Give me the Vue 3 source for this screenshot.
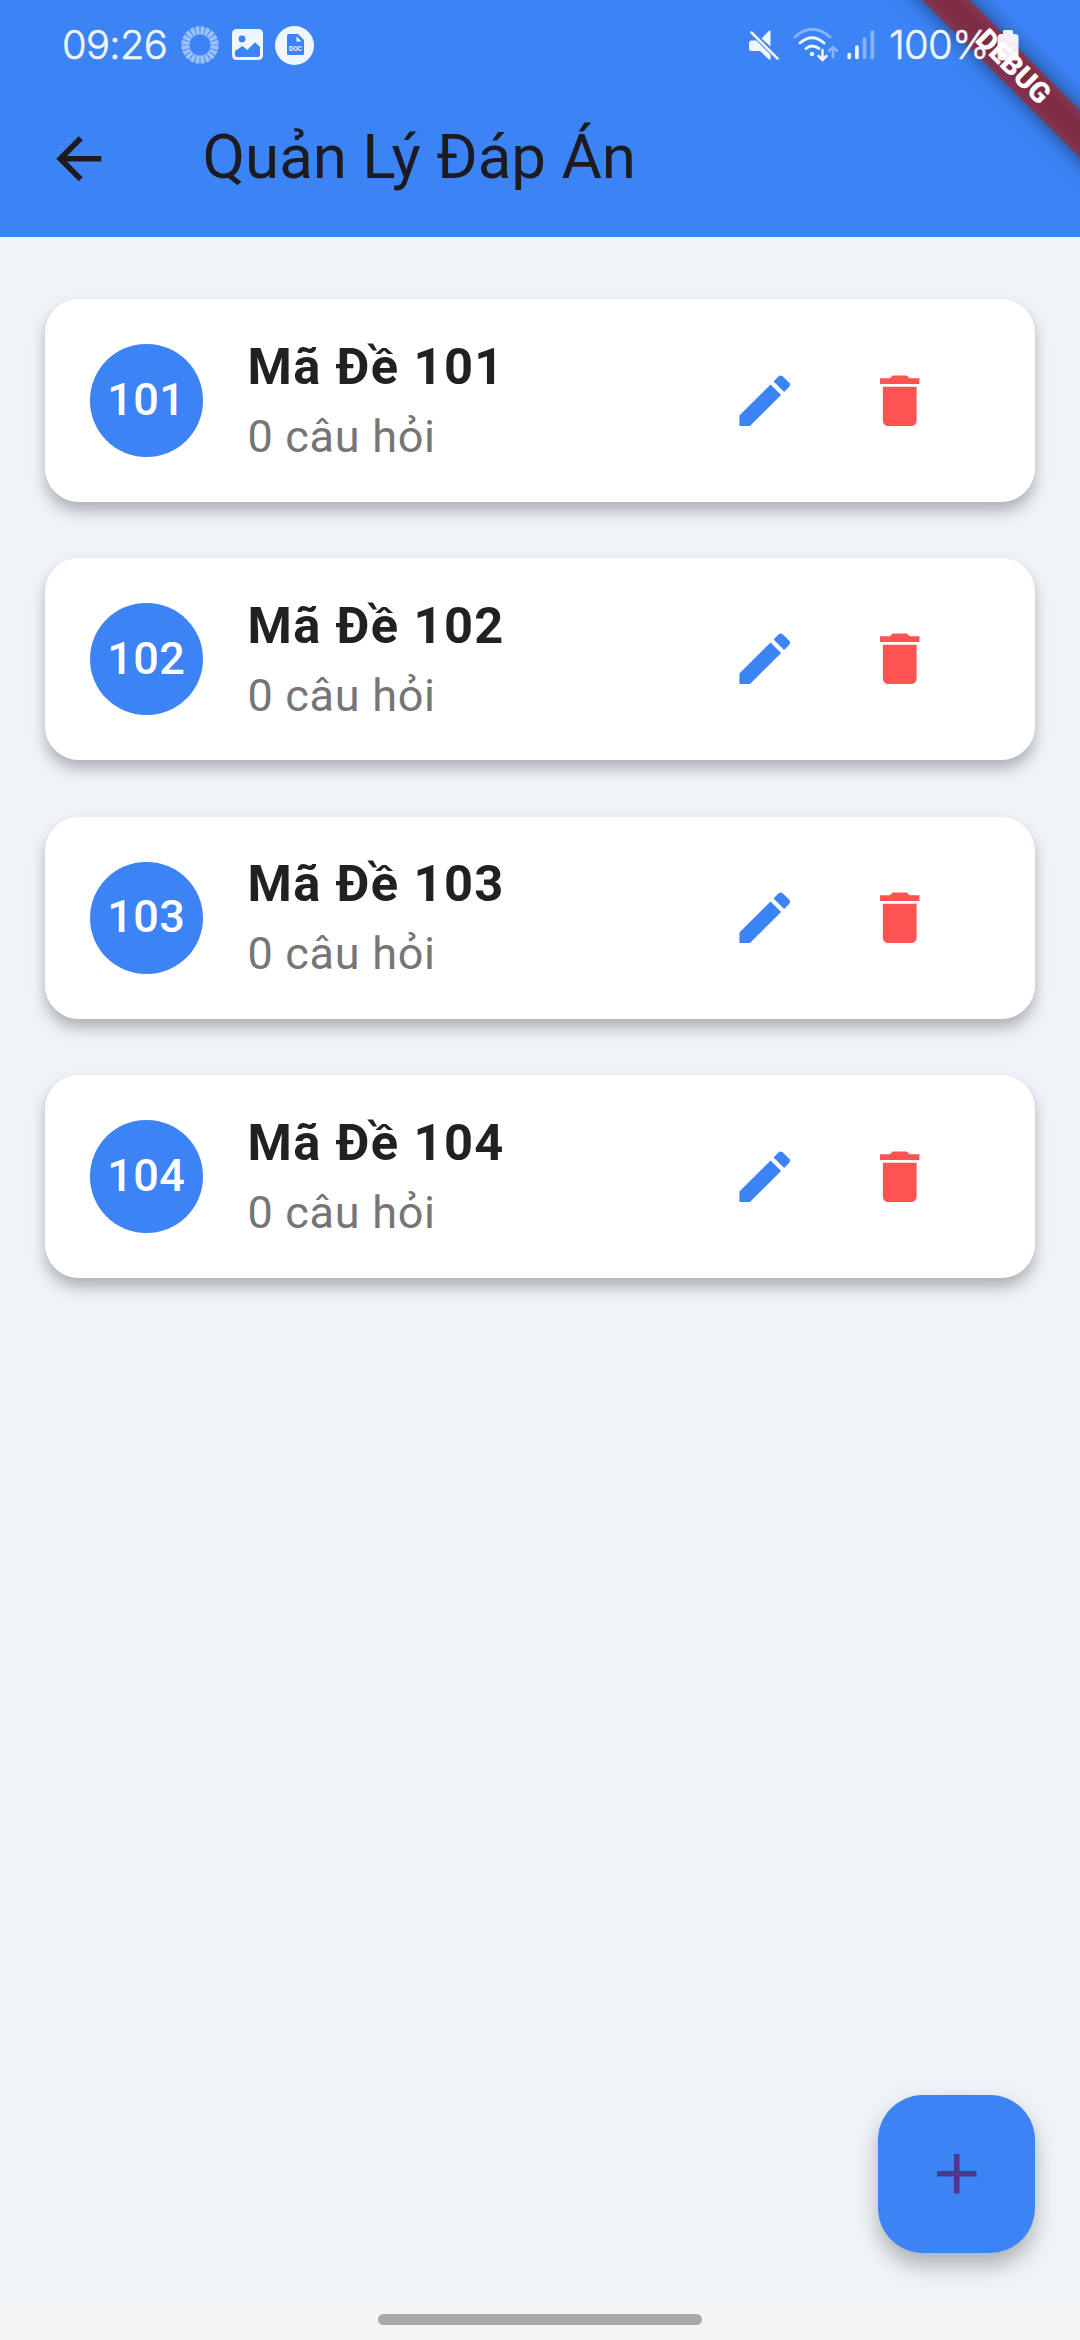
<script setup>
const exams = ['101', '102', '103', '104']
const ticks = Array.from({ length: 20 }, (_, i) => i * 18 + 9)
</script>

<template>
  <div class="screen">
    <header class="top">
      <div class="status">
        <span class="clock">09:26</span>
        <svg class="ring" viewBox="0 0 38 38">
          <g fill="#9dc1fb">
            <path v-for="a in ticks" :key="a" d="M16.700 .5 Q19 0 21.300 .5 L20.400 8.600 Q19 8.200 17.600 8.600Z" :transform="`rotate(${a} 19 19)`" />
          </g>
        </svg>
        <svg class="photo" viewBox="0 0 32 32">
          <path fill="#f0f6ff" fill-rule="evenodd" d="M5 0H26Q31 0 31 5V26Q31 31 26 31H5Q0 31 0 26V5Q0 0 5 0ZM10 6.500A3.400 3.400 0 1 0 10 13.300A3.400 3.400 0 1 0 10 6.500ZM3 22V25.500Q3 28 5.500 28H25.500Q28 28 28 25.500V18L23 13.300L15.300 21L10.500 17Z" />
        </svg>
        <svg class="doc" viewBox="0 0 39 39">
          <circle cx="19.500" cy="19.500" r="19.500" fill="#f0f6ff" />
          <path fill="#3c83f6" d="M13.500 8H23L29 14V27.500Q29 29 27.500 29H13.500Q12 29 12 27.500V9.500Q12 8 13.500 8Z" />
          <path fill="#f0f6ff" d="M21.500 10.500V15.500H26.500Z" />
          <text x="20.400" y="25" text-anchor="middle">DOC</text>
        </svg>
        <span class="spacer"></span>
        <svg class="mute" viewBox="0 0 30 30">
          <path fill="#f0f6ff" d="M2 10.500H7.500L21.500 24.500V29.500H20L11 21H3Q0 21 0 18V13Q0 10.500 2 10.500ZM12.500 8.500L20 .7H21.500V16.500Z" />
          <path d="M2.500 2.500L28.500 28.500" stroke="#f0f6ff" stroke-width="2.500" stroke-linecap="round" />
        </svg>
        <svg class="wifi" viewBox="0 0 46 34" fill="none" stroke="#f0f6ff" stroke-width="2.900" stroke-linecap="round">
          <path d="M2 9Q19-6.500 37 9" stroke="#86b3fb" />
          <path d="M7 15Q19 4.500 31 15M13 20.500Q19 15.500 26 20.500" />
          <circle cx="19" cy="26" r="2.300" fill="#f0f6ff" stroke="none" />
          <path d="M29.500 22V31M25.500 28L29.500 32L33.500 28" stroke-width="2.500" />
          <path d="M40 29V19M36 23L40 19L44 23" stroke="#86b3fb" stroke-width="2.500" />
        </svg>
        <svg class="signal" viewBox="0 0 28 30" stroke-width="3.700" stroke-linecap="round">
          <path d="M2.200 24.500V27.500M9.900 17V27.500" stroke="#f0f6ff" />
          <path d="M17.600 9V27.500M25.300 2V27.500" stroke="#86b3fb" />
        </svg>
        <span class="percent">100%</span>
        <svg class="battery" viewBox="0 0 22 31">
          <path fill="#fff" fill-opacity=".92" d="M7.500 0H14.500Q16 0 16 1.500V4H18Q21.500 4 21.500 7.500V27Q21.500 30.500 18 30.500H4Q.5 30.500 .5 27V7.500Q.5 4 4 4H6V1.500Q6 0 7.500 0Z" />
        </svg>
      </div>
      <div class="appbar">
        <svg class="icon" viewBox="0 0 24 24"><path fill="#1d1b20" d="M20 11H7.830l5.590-5.590L12 4l-8 8 8 8 1.410-1.410L7.830 13H20v-2z" /></svg>
        <h1>Quản Lý Đáp Án</h1>
      </div>
    </header>

    <main class="list">
      <article v-for="e in exams" :key="e" class="card">
        <div class="avatar"><span>{{ e }}</span></div>
        <div class="info">
          <div class="name">Mã Đề {{ e }}</div>
          <div class="count">0 câu hỏi</div>
        </div>
        <button class="action"><svg class="icon" viewBox="0 0 24 24"><path fill="#3c83f6" d="M3 17.250V21h3.750L17.810 9.940l-3.750-3.750L3 17.250zM20.710 7.040c.39-.39.39-1.020 0-1.410l-2.340-2.340c-.39-.39-1.020-.39-1.410 0l-1.830 1.830 3.750 3.750 1.830-1.830z" /></svg></button>
        <button class="action"><svg class="icon" viewBox="0 0 24 24"><path fill="#ff5252" d="M6 19c0 1.100.9 2 2 2h8c1.100 0 2-.9 2-2V7H6v12zM19 4h-3.500l-1-1h-5l-1 1H5v2h14V4z" /></svg></button>
      </article>
    </main>

    <button class="fab"><svg class="icon" viewBox="0 0 24 24"><path fill="#4f378b" d="M19 13h-6v6h-2v-6H5v-2h6V5h2v6h6v2z" /></svg></button>
    <footer class="nav"><div class="pill"></div></footer>

    <div class="banner">
      <div class="shade"></div>
      <div class="stripe">DEBUG</div>
    </div>
  </div>
</template>

<style>
body { margin: 0; }
</style>

<style scoped>
.screen {
  position: relative;
  width: 1080px;
  height: 2340px;
  overflow: hidden;
  display: flex;
  flex-direction: column;
  background: #f0f4f9;
  font-family: Roboto, "Noto Sans", sans-serif;
}
.top { height: 237.200px; background: #3c83f6; flex: none; }
.status {
  position: relative;
  z-index: 2;
  height: 80px;
  padding-top: 10px;
  box-sizing: border-box;
  padding-left: 62px;
  padding-right: 61px;
  display: flex;
  align-items: center;
  color: #f0f6ff;
  font-family: Inter, sans-serif;
  font-size: 40px;
  font-weight: 300;
  letter-spacing: -.7px;
  -webkit-text-stroke: .5px #f0f6ff;
}
.clock, .percent { white-space: nowrap; line-height: 48px; }
.clock { width: 118.500px; }
.ring { width: 38px; height: 38px; }
.photo { width: 32px; height: 32px; margin-left: 13px; }
.doc { width: 39px; height: 39px; margin-left: 11px; }
.doc text { font: 700 6.500px Roboto, sans-serif; fill: #f0f6ff; letter-spacing: 0; -webkit-text-stroke: 0; }
.spacer { flex: 1; }
.mute { width: 30px; height: 30px; }
.wifi { width: 46px; height: 34px; margin-left: 14px; }
.signal { width: 28px; height: 30px; margin-left: 8px; }
.percent { margin-left: 14px; width: 102px; }
.battery { width: 22px; height: 31px; margin-left: 6px; flex: none; }
.appbar { height: 157.500px; padding-left: 45px; display: flex; align-items: center; }
.icon { width: 67.500px; height: 67.500px; display: block; flex: none; }
h1 { margin: 0 0 2px 90px; font-size: 61.875px; font-weight: 400; line-height: 78.750px; color: #1d1b20; }
.list { flex: 1; padding: 62px 45px 0; display: flex; flex-direction: column; gap: 56.250px; }
.card {
  height: 202.500px;
  box-sizing: border-box;
  padding: 0 67.500px 0 45px;
  border-radius: 33.750px;
  background: #fff;
  display: flex;
  align-items: center;
  flex: none;
  box-shadow: 0 10px 16px -1px rgba(0, 0, 0, .25), 0 4px 14px rgba(0, 0, 0, .06);
}
.avatar {
  width: 112.500px;
  height: 112.500px;
  box-sizing: border-box;
  padding-bottom: 2px;
  border-radius: 50%;
  background: #3c83f6;
  color: #fff;
  font-size: 45px;
  font-weight: 500;
  letter-spacing: .42px;
  display: flex;
  align-items: center;
  justify-content: center;
}
.info { flex: 1; margin-left: 45px; padding-bottom: 2px; }
.name { font-size: 50.625px; font-weight: 700; line-height: 74px; letter-spacing: 1.406px; color: #212121; }
.count { font-size: 45px; line-height: 65px; letter-spacing: .703px; color: #757575; }
.action, .fab { border: 0; padding: 0; background: none; display: flex; align-items: center; justify-content: center; }
.action { width: 135px; height: 135px; }
.fab {
  position: absolute;
  right: 45px;
  bottom: 87.500px;
  width: 157.500px;
  height: 157.500px;
  border-radius: 45px;
  background: #3c83f6;
  box-shadow: 0 15px 22px -2px rgba(0, 0, 0, .22), 0 5px 24px rgba(0, 0, 0, .1);
}
.nav { height: 42px; flex: none; background: #f5f5f8; display: flex; justify-content: center; position: relative; }
.pill { width: 324px; height: 11px; margin-top: 16px; border-radius: 6px; background: #a9a9a9; }
.banner {
  position: absolute;
  left: 852.750px;
  top: 50.400px;
  width: 320px;
  height: 33.750px;
  transform: rotate(45deg);
}
.shade { position: absolute; inset: 0; background: rgba(0, 0, 0, .5); filter: blur(10px); }
.stripe {
  position: relative;
  height: 33.750px;
  line-height: 33.750px;
  background: rgba(183, 28, 28, .627);
  color: #fff;
  font-size: 28.700px;
  font-weight: 900;
  text-align: center;
}
</style>
